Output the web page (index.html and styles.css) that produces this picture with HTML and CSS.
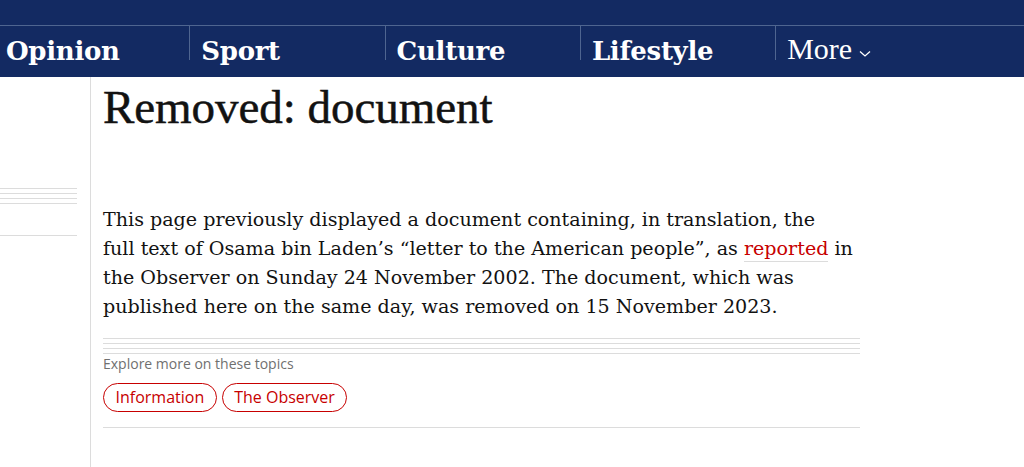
FILE: index.html
```html
<!DOCTYPE html>
<html lang="en">
<head>
<meta charset="utf-8">
<title>Removed: document</title>
<link rel="stylesheet" href="styles.css">
</head>
<body>
<header class="masthead">
  <div class="masthead-top"></div>
  <nav class="pillars">
    <a class="pillar first" href="#">Opinion</a>
    <a class="pillar" href="#">Sport</a>
    <a class="pillar" href="#">Culture</a>
    <a class="pillar" href="#">Lifestyle</a>
    <a class="pillar more" href="#">More<svg class="chev" viewBox="0 0 12 8" width="12" height="8"><path d="M1 1.5 L6 6 L11 1.5" fill="none" stroke="#fff" stroke-width="1.3"/></svg></a>
  </nav>
</header>
<div class="page">
  <aside class="left-col">
    <div class="rules"></div>
    <div class="rule-single"></div>
  </aside>
  <main class="content">
    <h1 class="headline">Removed: document</h1>
    <p class="body-text">This page previously displayed a document containing, in translation, the<br>
    full text of Osama bin Laden’s “letter to the American people”, as <a class="link" href="#">reported</a> in<br>
    the Observer on Sunday 24 November 2002. The document, which was<br>
    published here on the same day, was removed on 15 November 2023.</p>
    <div class="topics">
      <div class="rules wide"></div>
      <div class="topics-label">Explore more on these topics</div>
      <ul class="tags">
        <li><a class="tag" href="#">Information</a></li>
        <li><a class="tag" href="#">The Observer</a></li>
      </ul>
      <div class="rule-bottom"></div>
    </div>
  </main>
</div>
</body>
</html>
```

FILE: styles.css
```css
* { box-sizing: border-box; }
html, body { margin: 0; padding: 0; background: #fff; }
body { overflow: hidden; height: 467px; }

.masthead { background: #132a62; height: 77px; }
.masthead-top { height: 26px; border-bottom: 1px solid #4f6590; }
.pillars { display: flex; height: 50px; overflow: hidden; }
.pillar {
  display: flex;
  align-items: flex-start;
  width: 195.3px;
  flex: none;
  padding: 10px 0 0 11px;
  color: #fff;
  text-decoration: none;
  font-family: "DejaVu Serif", serif;
  font-weight: bold;
  font-size: 26px;
  letter-spacing: -0.3px;
  border-left: 1px solid #4f6590;
  height: 34px;
}
.pillar.first { margin-left: -6px; border-left-color: transparent; }
.pillar.more {
  font-family: "Liberation Serif", serif;
  font-weight: normal;
  font-size: 30px;
  padding-top: 6px;
  letter-spacing: 0;
}
.chev { margin: 18px 0 0 7px; }

.page { display: flex; min-height: 390px; }
.left-col {
  width: 91px;
  flex: none;
  border-right: 1px solid #dcdcdc;
  padding-top: 111px;
}
.left-col .rules { width: 77px; }
.rules {
  height: 16px;
  background: repeating-linear-gradient(to bottom, #dcdcdc 0, #dcdcdc 1px, transparent 1px, transparent 5px);
}
.rule-single { width: 77px; height: 1px; background: #dcdcdc; margin-top: 31px; }

.content { padding-left: 12px; width: 769px; flex: none; }
.headline {
  margin: 0;
  padding-top: 2px;
  font-family: "Liberation Serif", serif;
  font-weight: normal;
  font-size: 47px;
  line-height: 56px;
  color: #121212;
  letter-spacing: -0.05px;
  -webkit-text-stroke: 0.5px #121212;
}
.body-text {
  margin: 70px 0 0;
  font-family: "DejaVu Serif", serif;
  font-size: 19.1px;
  line-height: 29px;
  color: #121212;
  white-space: nowrap;
}
.link {
  color: #c70000;
  text-decoration: none;
  border-bottom: 1px solid #dcdcdc;
  padding-bottom: 1px;
}

.topics { margin-top: 17px; width: 757px; }
.topics-label {
  font-family: "Open Sans", sans-serif;
  font-size: 14px;
  color: #707070;
  line-height: 20px;
  margin-top: 0;
}
.tags { list-style: none; margin: 9px 0 0; padding: 0; display: flex; gap: 5px; }
.tag {
  display: block;
  height: 29px;
  line-height: 27px;
  padding: 0 11.5px;
  border: 1px solid #c70000;
  border-radius: 15px;
  color: #c70000;
  text-decoration: none;
  font-family: "Open Sans", sans-serif;
  font-size: 16px;
}
.rule-bottom { height: 1px; background: #dcdcdc; margin-top: 15px; }
```
